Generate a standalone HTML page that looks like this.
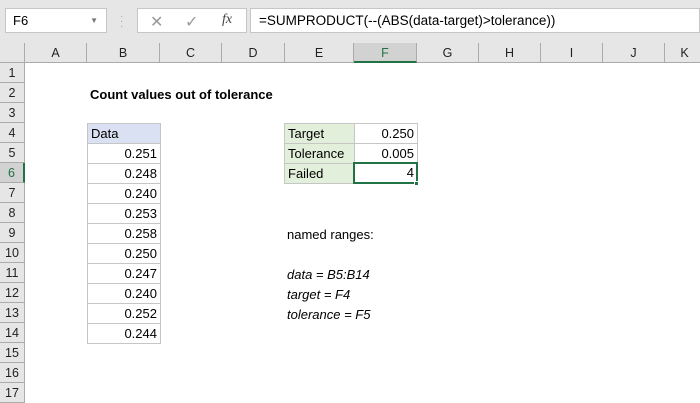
<!DOCTYPE html>
<html><head><style>
*{margin:0;padding:0;box-sizing:border-box}
body{width:700px;height:400px;overflow:hidden;background:#fff;font-family:"Liberation Sans",sans-serif;font-size:13px;color:#000;position:relative}
.a{position:absolute}
.ch{position:absolute;top:43px;height:20px;background:#e6e6e6;border-right:1px solid #ababab;border-bottom:1px solid #ababab;text-align:center;line-height:20px;font-size:12.5px;color:#222}
.rh{position:absolute;left:0;width:25px;height:20px;background:#e6e6e6;border-bottom:1px solid #ababab;border-right:1px solid #ababab;text-align:center;line-height:20px;font-size:12.5px;color:#222}
.c{position:absolute;height:21px;line-height:20px;border:1px solid #c6c6c6;padding:0 3px}
.r{text-align:right}
</style></head><body>
<div class="a" style="left:0;top:0;width:700px;height:43px;background:#e6e6e6"></div>
<div class="a" style="left:5px;top:8px;width:102px;height:25px;background:#fff;border:1px solid #c6c6c6;line-height:23px;padding-left:7px">F6<span style="position:absolute;right:8px;top:0;font-size:8px;color:#777">▼</span></div>
<div class="a" style="left:120px;top:14px;color:#aaa;font-size:10px;line-height:5px">·<br>·<br>·</div>
<div class="a" style="left:137px;top:8px;width:110px;height:25px;background:#fff;border:1px solid #c6c6c6"></div>
<div class="a" style="left:150px;top:12px;color:#999;font-size:16px">✕</div>
<div class="a" style="left:185px;top:12px;color:#999;font-size:16px">✓</div>
<div class="a" style="left:222px;top:12px;color:#444;font-size:14px;font-style:italic;font-family:'Liberation Serif',serif">fx</div>
<div class="a" style="left:250px;top:8px;width:450px;height:25px;background:#fff;border:1px solid #c6c6c6;line-height:23px;padding-left:8px;font-size:13.5px">=SUMPRODUCT(--(ABS(data-target)&gt;tolerance))</div>
<div class="a" style="left:0;top:43px;width:25px;height:20px;background:#e6e6e6;border-right:1px solid #ababab;border-bottom:1px solid #ababab"></div>
<div class="ch" style="left:25px;width:62px">A</div>
<div class="ch" style="left:87px;width:73px">B</div>
<div class="ch" style="left:160px;width:62px">C</div>
<div class="ch" style="left:222px;width:63px">D</div>
<div class="ch" style="left:285px;width:69px">E</div>
<div class="ch" style="left:354px;width:63px;background:#d2d2d2;border-bottom:2px solid #217346;color:#217346">F</div>
<div class="ch" style="left:417px;width:62px">G</div>
<div class="ch" style="left:479px;width:62px">H</div>
<div class="ch" style="left:541px;width:62px">I</div>
<div class="ch" style="left:603px;width:62px">J</div>
<div class="ch" style="left:665px;width:40px">K</div>
<div class="rh" style="top:63px">1</div><div class="rh" style="top:83px">2</div><div class="rh" style="top:103px">3</div><div class="rh" style="top:123px">4</div><div class="rh" style="top:143px">5</div>
<div class="rh" style="top:163px;background:#d2d2d2;border-right:2px solid #217346;color:#217346">6</div>
<div class="rh" style="top:183px">7</div><div class="rh" style="top:203px">8</div><div class="rh" style="top:223px">9</div><div class="rh" style="top:243px">10</div><div class="rh" style="top:263px">11</div><div class="rh" style="top:283px">12</div><div class="rh" style="top:303px">13</div><div class="rh" style="top:323px">14</div><div class="rh" style="top:343px">15</div><div class="rh" style="top:363px">16</div><div class="rh" style="top:383px">17</div>
<div class="a" style="left:90px;top:85px;font-weight:bold;line-height:20px">Count values out of tolerance</div>
<div class="c" style="left:87px;top:123px;width:74px;background:#d9e1f2">Data</div>
<div class="c r" style="left:87px;top:143px;width:74px">0.251</div>
<div class="c r" style="left:87px;top:163px;width:74px">0.248</div>
<div class="c r" style="left:87px;top:183px;width:74px">0.240</div>
<div class="c r" style="left:87px;top:203px;width:74px">0.253</div>
<div class="c r" style="left:87px;top:223px;width:74px">0.258</div>
<div class="c r" style="left:87px;top:243px;width:74px">0.250</div>
<div class="c r" style="left:87px;top:263px;width:74px">0.247</div>
<div class="c r" style="left:87px;top:283px;width:74px">0.240</div>
<div class="c r" style="left:87px;top:303px;width:74px">0.252</div>
<div class="c r" style="left:87px;top:323px;width:74px">0.244</div>
<div class="c" style="left:284px;top:123px;width:71px;background:#e2efda">Target</div>
<div class="c" style="left:284px;top:143px;width:71px;background:#e2efda">Tolerance</div>
<div class="c" style="left:284px;top:163px;width:71px;background:#e2efda">Failed</div>
<div class="c r" style="left:354px;top:123px;width:64px">0.250</div>
<div class="c r" style="left:354px;top:143px;width:64px">0.005</div>
<div class="c r" style="left:353px;top:162px;width:65px;height:22px;border:2px solid #217346;line-height:18px;padding-right:2px">4</div>
<div class="a" style="left:414px;top:181px;width:5px;height:5px;background:#217346;border:1px solid #fff"></div>
<div class="a" style="left:287px;top:225px;line-height:20px">named ranges:</div>
<div class="a" style="left:287px;top:265px;line-height:20px;font-style:italic">data = B5:B14</div>
<div class="a" style="left:287px;top:285px;line-height:20px;font-style:italic">target = F4</div>
<div class="a" style="left:287px;top:305px;line-height:20px;font-style:italic">tolerance = F5</div>
</body></html>
